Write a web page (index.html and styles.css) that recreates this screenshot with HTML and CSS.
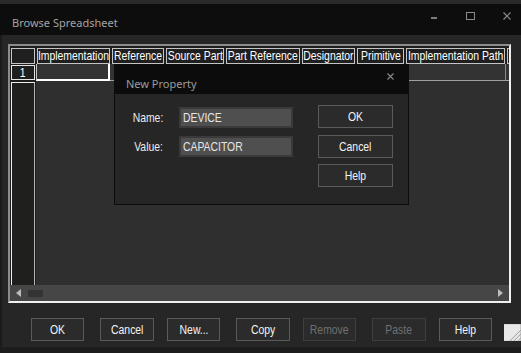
FILE: index.html
```html
<!DOCTYPE html>
<html lang="en">
<head>
    <meta charset="UTF-8">
    <title>Browse Spreadsheet</title>
    <link rel="stylesheet" href="styles.css">
</head>
<body>
<div class="win">
    <div class="titlebar">
        <span class="title">Browse Spreadsheet</span>
        <div class="ctrls">
            <svg class="c-min" width="6" height="8" viewBox="0 0 6 8"><rect x="0" y="5" width="6" height="2" fill="#7c7c7c"/></svg>
            <svg class="c-max" width="9" height="8" viewBox="0 0 9 8"><rect x="0.5" y="0.5" width="8" height="7" fill="none" stroke="#8a8a8a"/></svg>
            <svg class="c-close" width="8" height="8" viewBox="0 0 8 8"><path d="M0.5 0.5L7.5 7.5M7.5 0.5L0.5 7.5" stroke="#8a8a8a" stroke-width="1.2"/></svg>
        </div>
    </div>
    <div class="body">
        <div class="grid">
            <div class="hrow">
                <div class="corner"></div>
                <div class="hc w-impl"><span class="t">Implementation</span></div>
                <div class="hc w-ref"><span class="t">Reference</span></div>
                <div class="hc w-src"><span class="t">Source Part</span></div>
                <div class="hc w-pref"><span class="t">Part Reference</span></div>
                <div class="hc w-des"><span class="t">Designator</span></div>
                <div class="hc w-prim"><span class="t">Primitive</span></div>
                <div class="hc w-path"><span class="t">Implementation Path</span></div>
                <div class="hc w-more"></div>
            </div>
            <div class="row1">
                <div class="rh"><span class="t">1</span></div>
                <div class="r1data">
                    <div class="cur"></div>
                    <div class="r1rest"></div>
                </div>
            </div>
            <div class="rest">
                <div class="rhcol"></div>
                <div class="data"></div>
            </div>
            <div class="hscroll">
                <svg class="arr-l" width="5" height="8" viewBox="0 0 5 8"><polygon points="5,0 0,4 5,8" fill="#bdbdbd"/></svg>
                <div class="thumb"></div>
                <svg class="arr-r" width="5" height="8" viewBox="0 0 5 8"><polygon points="0,0 5,4 0,8" fill="#bdbdbd"/></svg>
            </div>
        </div>
        <div class="btns">
            <div class="btn"><span class="t">OK</span></div>
            <div class="btn"><span class="t">Cancel</span></div>
            <div class="btn"><span class="t">New...</span></div>
            <div class="btn"><span class="t">Copy</span></div>
            <div class="btn off"><span class="t">Remove</span></div>
            <div class="btn off"><span class="t">Paste</span></div>
            <div class="btn"><span class="t">Help</span></div>
            <svg class="grip" width="17" height="17" viewBox="0 0 17 17">
                <rect width="17" height="17" fill="#e9e9e9"/>
                <path d="M17 6L6 17M17 10L10 17M17 14L14 17" stroke="#9c9c9c" stroke-width="1"/>
            </svg>
        </div>
    </div>
    <div class="foot"></div>

    <!-- new property dialog -->
    <div class="dlg">
        <div class="dlg-title">
            <span class="dlg-name">New Property</span>
            <svg class="dlg-x" width="7" height="7" viewBox="0 0 7 7"><path d="M0.5 0.5L6.5 6.5M6.5 0.5L0.5 6.5" stroke="#858585" stroke-width="1.2"/></svg>
        </div>
        <div class="dlg-body">
            <div class="fields">
                <div class="lbl"><span class="t">Name:</span></div>
                <div class="inp"><span class="t">DEVICE</span></div>
                <div class="lbl"><span class="t">Value:</span></div>
                <div class="inp"><span class="t">CAPACITOR</span></div>
            </div>
            <div class="dlg-btns">
                <div class="btn dbtn"><span class="t">OK</span></div>
                <div class="btn dbtn"><span class="t">Cancel</span></div>
                <div class="btn dbtn"><span class="t">Help</span></div>
            </div>
        </div>
    </div>
</div>
</body>
</html>
```
FILE: styles.css
```css
html, body{
    margin: 0;
    width: 521px;
    height: 353px;
    overflow: hidden;
    background-color: #2a2a2a;
}
.win{
    position: relative;
    margin-top: 4px;
    height: 349px;
    font-family: "Liberation Sans", Arial, sans-serif;
    font-size: 13px;
    color: #fff;
}
/* the ui font is a narrow one: squeeze the text */
.t{
    display: inline-block;
    white-space: nowrap;
    transform: scaleX(.8);
}

/* title bar */
.titlebar{
    height: 31px;
    background-color: #0d0d0d;
    display: flex;
    padding-left: 12px;
}
.title{
    font-family: "Noto Sans", sans-serif;
    font-size: 11px;
    line-height: 15px;
    color: #a4a4a4;
    padding-top: 11px;
}
.ctrls{
    margin-left: auto;
    display: flex;
    align-items: flex-start;
    padding-top: 8px;
}
.c-max{
    margin-left: 29px;
}
.c-close{
    margin-left: 28px;
    margin-right: 10px;
}

/* window body */
.body{
    height: 312px;
    box-sizing: border-box;
    background-color: #262626;
    border-left: 2px solid #1b1b1b;
    padding: 9px 0 0 6px;
}
.foot{
    height: 6px;
    background-color: #1c1c1c;
}

/* spreadsheet */
.grid{
    width: 503px;
    height: 259px;
    box-sizing: border-box;
    border: 2px solid #f0f0f0;
    border-top-color: #8c8c8c;
    border-left-color: #8c8c8c;
    background-color: #1e1e1e;
    display: flex;
    flex-direction: column;
    overflow: hidden;
}
.hrow{
    display: flex;
    gap: 2px;
    height: 16px;
    margin-top: 2px;
    padding-left: 1px;
    flex-shrink: 0;
}
.corner, .hc{
    box-sizing: border-box;
    height: 16px;
    border: 1px solid #c4c4c4;
    background-color: #1f1f1f;
    flex-shrink: 0;
}
.corner{ width: 24px; }
.hc{
    line-height: 14px;
    display: flex;
    justify-content: center;
    overflow: hidden;
}
.w-impl{ width: 73px; }
.w-ref{ width: 52px; }
.w-src{ width: 58px; }
.w-pref{ width: 74px; }
.w-des{ width: 53px; }
.w-prim{ width: 47px; }
.w-path{ width: 99px; }
.w-more{ width: 20px; }

.row1{
    display: flex;
    height: 17px;
    flex-shrink: 0;
}
.rh{
    box-sizing: border-box;
    width: 24px;
    height: 15px;
    margin: 1px 0 0 1px;
    border: 1px solid #e6e6e6;
    background-color: #1f201d;
    display: flex;
    justify-content: center;
    line-height: 13px;
}
.r1data{
    flex: 1;
    margin-left: 1px;
    display: flex;
    background-color: #333;
    border-bottom: 1px solid #a0a0a0;
}
.cur{
    box-sizing: border-box;
    width: 74px;
    height: 17px;
    border-left: 1px solid #c8c8c8;
    border-right: 2px solid #fff;
    border-bottom: 2px solid #fff;
}
.r1rest{
    width: 395px;
    border-right: 1px solid #8a8a8a;
}
.rest{
    flex: 1;
    display: flex;
}
.rhcol{
    box-sizing: border-box;
    width: 24px;
    margin: 1px 0 0 1px;
    border: 1px solid #ececec;
    border-right-color: #b4b4b4;
    border-bottom: none;
    background-color: #1f201d;
}
.data{
    flex: 1;
    margin-left: 1px;
    background-color: #2f2f2f;
}
.hscroll{
    height: 16px;
    flex-shrink: 0;
    background-color: #464646;
    display: flex;
    align-items: center;
}
.arr-l{
    margin-left: 6px;
}
.thumb{
    width: 15px;
    height: 7px;
    margin-left: 7px;
    background-color: #333;
}
.arr-r{
    margin-left: auto;
    margin-right: 6px;
}

/* buttons */
.btns{
    display: flex;
    gap: 13px;
    margin-top: 15px;
    padding-left: 23px;
}
.btn{
    box-sizing: border-box;
    width: 54px;
    height: 23px;
    border: 1px solid #5a5a5a;
    background-color: #2b2b2b;
    display: flex;
    justify-content: center;
    line-height: 21px;
    color: #f4f4f4;
}
.btns .btn:nth-child(2n){
    margin-left: 3px;
}
.btn.off{
    border-color: #3e3e3e;
    color: #707070;
}
.grip{
    margin-left: -1px;
    align-self: flex-end;
}

/* dialog */
.dlg{
    position: absolute;
    left: 114px;
    top: 60px;
    width: 295px;
    height: 141px;
    box-sizing: border-box;
    border: 1px solid #0c0c0c;
    background-color: #262626;
}
.dlg-title{
    height: 29px;
    background-color: #0c0c0c;
    display: flex;
    padding-left: 11px;
}
.dlg-name{
    font-family: "Noto Sans", sans-serif;
    font-size: 11px;
    line-height: 15px;
    color: #9c9c9c;
    padding-top: 11px;
}
.dlg-x{
    margin: 8px 14px 0 auto;
}
.dlg-body{
    display: flex;
    align-items: flex-start;
    padding: 11px 0 0 16px;
}
.fields{
    display: grid;
    grid-template-columns: 32px 114px;
    grid-auto-rows: 21px;
    column-gap: 16px;
    row-gap: 8px;
    margin-top: 2px;
}
.lbl{
    display: flex;
    justify-content: flex-end;
    line-height: 21px;
    color: #ececec;
}
.lbl .t{
    transform-origin: right;
}
.inp{
    box-sizing: border-box;
    height: 21px;
    border: 2px solid #3a3a3a;
    background-color: #4f4f4f;
    padding-left: 2px;
    line-height: 17px;
    color: #e6e6e6;
}
.inp .t{
    transform-origin: left;
}
.dlg-btns{
    display: flex;
    flex-direction: column;
    gap: 7px;
    margin-left: 25px;
}
.dbtn{
    width: 75px;
}
.dlg-btns .dbtn:last-child{
    margin-top: -1px;
}
```
